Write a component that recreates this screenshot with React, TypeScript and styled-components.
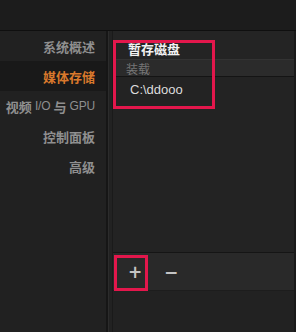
import React from 'react';
import styled, { createGlobalStyle } from 'styled-components';

const GlobalStyle = createGlobalStyle`
  html, body {
    margin: 0;
    padding: 0;
    background: #222222;
    font-family: "Liberation Sans", "Noto Sans CJK SC", sans-serif;
  }
`;

const Screen = styled.div`
  position: relative;
  width: 296px;
  height: 332px;
  overflow: hidden;
  background: #222222;
  display: flex;
  flex-direction: column;
`;

const TopBar = styled.div`
  height: 30px;
  background: #1c1c1c;
  border-bottom: 1px solid #0f0f0f;
`;

const Body = styled.div`
  flex: 1;
  display: flex;
  flex-direction: row;
`;

const Sidebar = styled.div`
  width: 106px;
  background: #212121;
  border-right: 2px solid #161616;
  display: flex;
  flex-direction: column;
`;

const NavItem = styled.div<{ $active?: boolean }>`
  height: 30px;
  display: flex;
  align-items: center;
  justify-content: flex-end;
  padding-right: 11px;
  font-size: 13px;
  font-weight: bold;
  font-family: "Noto Sans CJK SC", "Liberation Sans", sans-serif;
  color: ${p => (p.$active ? '#d8782c' : '#8f8f8f')};
  background: ${p => (p.$active ? '#191919' : 'transparent')};
  white-space: pre;
`;

const Latin = styled.span`
  font-family: "Liberation Sans", sans-serif;
  font-weight: normal;
  font-size: 12px;
  letter-spacing: -0.2px;
`;

const Panel = styled.div`
  flex: 1;
  display: flex;
  flex-direction: column;
  padding-left: 3px;
  border-left: 1px solid #2c2c2c;
`;

const Table = styled.div`
  flex: 1;
  display: flex;
  flex-direction: column;
  background: #232323;
  border-left: 1px solid #1a1a1a;
  border-right: 2px solid #1a1a1a;
`;

const HeaderRow = styled.div`
  height: 29px;
  box-sizing: border-box;
  display: flex;
  align-items: flex-end;
  padding: 0 0 1px 15px;
  background: #242424;
  border-bottom: 1px solid #333333;
  font-family: "Noto Sans CJK SC", "Liberation Sans", sans-serif;
  font-weight: bold;
  font-size: 13px;
  line-height: 18px;
  color: #f2f2f2;
`;

const SubHeader = styled.div`
  height: 16px;
  display: flex;
  align-items: center;
  padding-left: 13px;
  background: #2b2b2b;
  border-bottom: 1px solid #141414;
  font-family: "Noto Sans CJK SC", "Liberation Sans", sans-serif;
  font-size: 12px;
  color: #767676;
`;

const DataRow = styled.div`
  height: 24px;
  display: flex;
  align-items: center;
  padding-left: 17px;
  font-size: 13px;
  color: #dcdcdc;
`;

const Fill = styled.div`
  flex: 1;
`;

const Toolbar = styled.div`
  height: 37px;
  display: flex;
  align-items: center;
  gap: 22px;
  padding-left: 15px;
  background: #292929;
  border-top: 1px solid #151515;
  border-bottom: 1px solid #1d1d1d;
`;

const ToolButton = styled.div`
  width: 14px;
  display: flex;
  justify-content: center;
  font-family: "DejaVu Sans", sans-serif;
  font-weight: bold;
  font-size: 17px;
  color: #c4c4c4;
`;

const Bottom = styled.div`
  height: 41px;
  background: #222222;
`;

const Highlight = styled.div<{ $x: number; $y: number; $w: number; $h: number }>`
  position: absolute;
  left: ${p => p.$x}px;
  top: ${p => p.$y}px;
  width: ${p => p.$w}px;
  height: ${p => p.$h}px;
  border: 3px solid #e3174c;
  box-sizing: border-box;
  pointer-events: none;
`;

const navItems = [
  { key: 'overview', label: <>系统概述</> },
  { key: 'media', label: <>媒体存储</>, active: true },
  { key: 'video', label: <>视频<Latin> I/O </Latin>与<Latin> GPU</Latin></> },
  { key: 'control', label: <>控制面板</> },
  { key: 'advanced', label: <>高级</> },
];

export default function App() {
  return (
    <Screen>
      <GlobalStyle />
      <TopBar />
      <Body>
        <Sidebar>
          {navItems.map(item => (
            <NavItem key={item.key} $active={item.active}>
              {item.label}
            </NavItem>
          ))}
        </Sidebar>
        <Panel>
          <Table>
            <HeaderRow>暂存磁盘</HeaderRow>
            <SubHeader>装载</SubHeader>
            <DataRow>C:\ddooo</DataRow>
            <Fill />
            <Toolbar>
              <ToolButton>+</ToolButton>
              <ToolButton>−</ToolButton>
            </Toolbar>
            <Bottom />
          </Table>
        </Panel>
      </Body>
      <Highlight $x={113} $y={40} $w={102} $h={69} />
      <Highlight $x={114} $y={255} $w={34} $h={36} />
    </Screen>
  );
}
